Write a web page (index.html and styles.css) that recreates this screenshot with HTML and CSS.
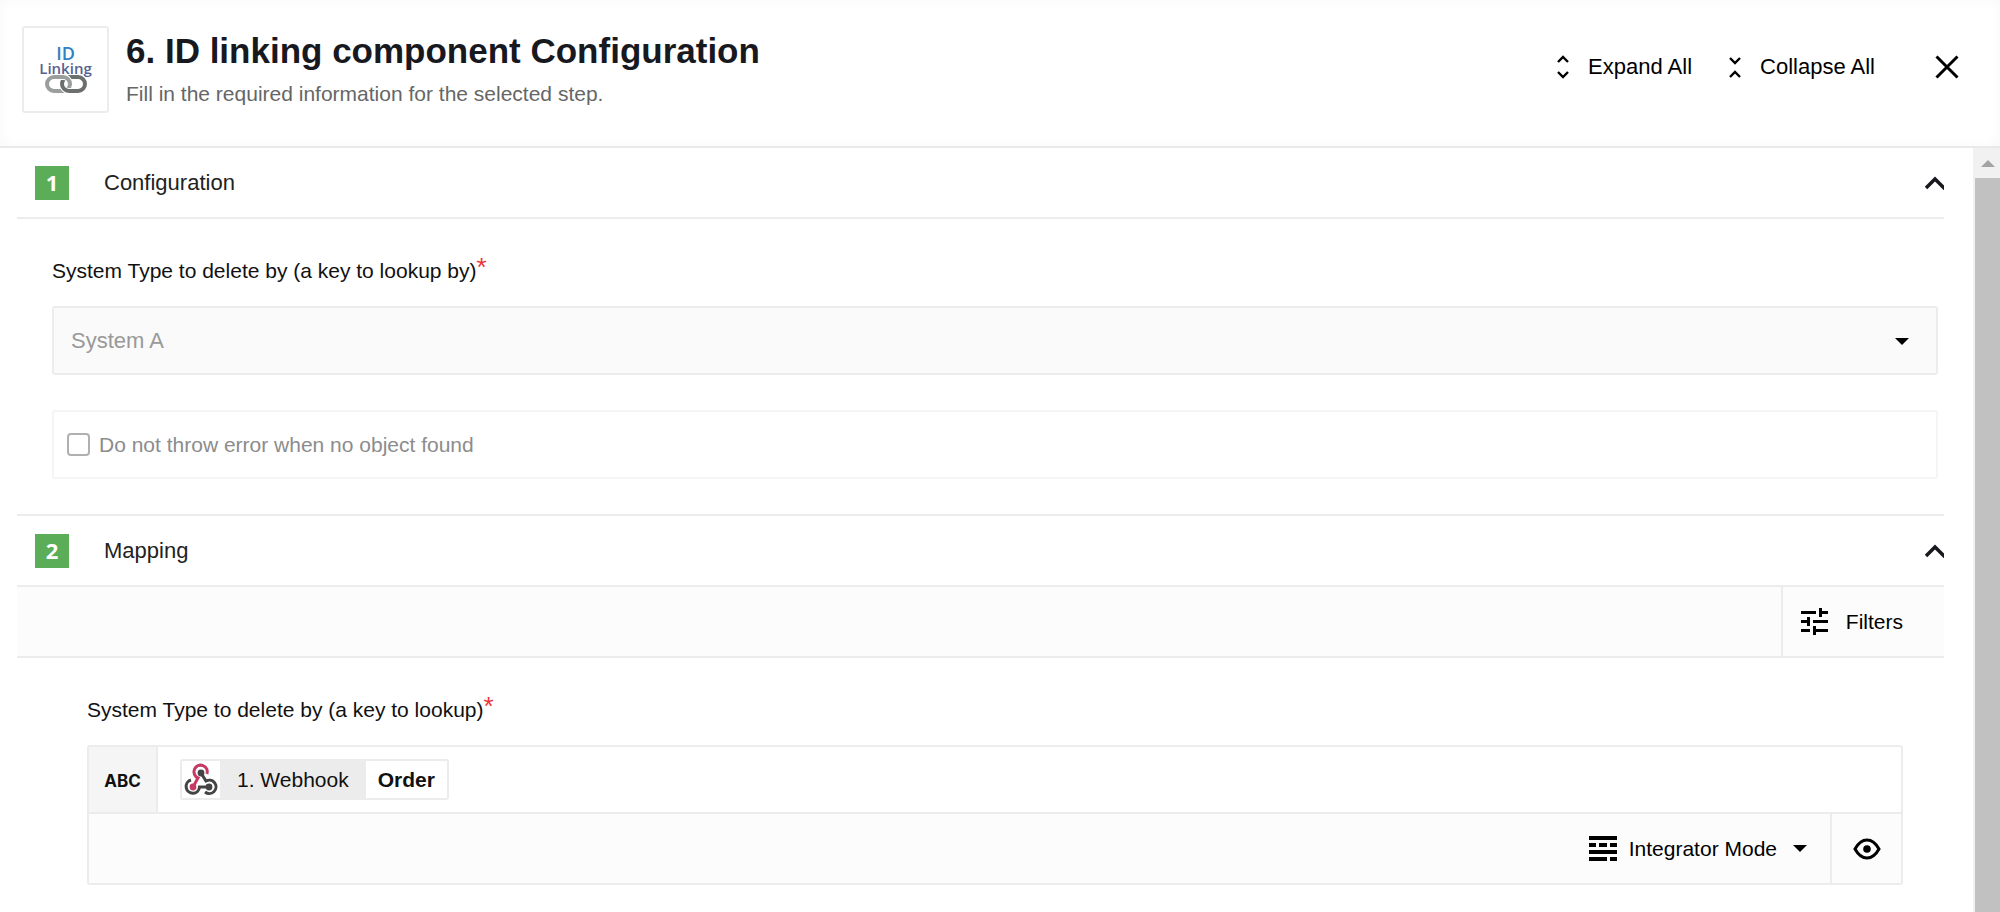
FILE: index.html
```html
<!DOCTYPE html>
<html lang="en">
  <head>
    <meta charset="UTF-8" />
    <meta name="viewport" content="width=device-width, initial-scale=1.0" />
    <title>ID linking component Configuration</title>
    <link rel="stylesheet" href="styles.css">
  </head>
  <body>
    <header class="header">
      <div class="logo">
        <div class="logo-text"><span class="logo-id">ID</span><br>Linking</div>
        <svg class="logo-chain" width="42" height="20" viewBox="0 0 42 20" fill="none" stroke-width="4">
          <rect x="2" y="2" width="23" height="14" rx="7" stroke="#9a9e9d" />
          <rect x="17" y="2" width="23" height="14" rx="7" stroke="#fff" stroke-width="6" />
          <rect x="17" y="2" width="23" height="14" rx="7" stroke="#6b6f6e" />
          <path d="M15 2h3a7 7 0 0 1 7 7" stroke="#fff" stroke-width="6" />
          <path d="M13 2h5a7 7 0 0 1 7 7v1" stroke="#9a9e9d" />
        </svg>
      </div>
      <div class="header-text">
        <h1>6. ID linking component Configuration</h1>
        <p>Fill in the required information for the selected step.</p>
      </div>
      <div class="actions">
        <button class="action" type="button">
          <svg width="12" height="24" viewBox="0 0 12 24" fill="none" stroke="currentColor" stroke-width="2.4">
            <path d="M1 7l5-5 5 5M1 17l5 5 5-5" />
          </svg>
          Expand All
        </button>
        <button class="action" type="button">
          <svg width="12" height="24" viewBox="0 0 12 24" fill="none" stroke="currentColor" stroke-width="2.4">
            <path d="M1 3l5 5 5-5M1 22l5-5 5 5" />
          </svg>
          Collapse All
        </button>
        <button class="close" type="button" aria-label="Close">
          <svg width="24" height="24" viewBox="0 0 24 24" fill="none" stroke="currentColor" stroke-width="3">
            <path d="M1.5 1.5l21 21M22.5 1.5l-21 21" />
          </svg>
        </button>
      </div>
    </header>

    <div class="main">
      <main class="content">
        <section class="section">
          <div class="section-header">
            <span class="step">1</span>
            <h2>Configuration</h2>
            <button class="toggle" type="button" aria-label="Collapse Configuration">
              <svg width="19" height="14" viewBox="0 0 19 14" fill="none" stroke="currentColor" stroke-width="3.5">
                <path d="M1 12l9-9 10 10" />
              </svg>
            </button>
          </div>
          <div class="fields">
            <label class="label" for="system-type">System Type to delete by (a key to lookup by)<span class="required">*</span></label>
            <div class="select-box">
              <select id="system-type" disabled>
                <option>System A</option>
              </select>
              <svg class="select-caret" width="14" height="7" viewBox="0 0 14 7"><path d="M0 0h14L7 7z" /></svg>
            </div>
            <div class="check-box">
              <input id="no-error" type="checkbox" disabled>
              <label for="no-error">Do not throw error when no object found</label>
            </div>
          </div>
        </section>

        <section class="section">
          <div class="section-header">
            <span class="step">2</span>
            <h2>Mapping</h2>
            <button class="toggle" type="button" aria-label="Collapse Mapping">
              <svg width="19" height="14" viewBox="0 0 19 14" fill="none" stroke="currentColor" stroke-width="3.5">
                <path d="M1 12l9-9 10 10" />
              </svg>
            </button>
          </div>
          <div class="toolbar">
            <button class="filters" type="button">
              <svg width="27" height="27" viewBox="3 3 18 18">
                <path d="M3 17v2h6v-2H3zM3 5v2h10V5H3zm10 16v-2h8v-2h-8v-2h-2v6h2zM7 9v2H3v2h4v2h2V9H7zm14 4v-2H11v2h10zm-6-4h2V7h4V5h-4V3h-2v6z" />
              </svg>
              Filters
            </button>
          </div>
          <div class="mapping">
            <div class="label" id="mapping-label">System Type to delete by (a key to lookup)<span class="required">*</span></div>
            <div class="editor" role="group" aria-labelledby="mapping-label">
              <div class="editor-value">
                <span class="type">ABC</span>
                <div class="chip">
                  <svg class="chip-icon" width="38" height="36" viewBox="0 0 38 36" fill="none" stroke-width="3">
                    <path d="M9 18a6.700 6.700 0 1 0 8.500 7H27" stroke="#444" />
                    <path d="M19 11l5 8a6.700 6.700 0 1 1-1 11" stroke="#444" />
                    <path d="M11 25l5-9a6.700 6.700 0 1 1 9-4" stroke="#c73a63" />
                    <circle cx="11" cy="25" r="3.400" fill="#c73a63" />
                    <circle cx="19" cy="11" r="3.400" fill="#444" />
                    <circle cx="27" cy="25" r="3.400" fill="#444" />
                  </svg>
                  <span class="chip-step">1. Webhook</span>
                  <strong class="chip-field">Order</strong>
                </div>
              </div>
              <div class="editor-footer">
                <button class="mode" type="button">
                  <svg width="28" height="25" viewBox="0 0 28 25">
                    <path d="M0 0h28v4H0zM0 7h7v4H0zM10 7h8v4h-8zM21 7h7v4h-7zM0 14h28v4H0zM0 21h18v4H0zM21 21h7v4h-7z" />
                  </svg>
                  Integrator Mode
                  <svg class="mode-caret" width="14" height="7" viewBox="0 0 14 7"><path d="M0 0h14L7 7z" /></svg>
                </button>
                <button class="preview" type="button" aria-label="Preview">
                  <svg width="28" height="22" viewBox="0 0 28 22">
                    <path d="M2 11Q7 2 14 2t12 9q-5 9-12 9T2 11z" fill="none" stroke="currentColor" stroke-width="3" />
                    <circle cx="14" cy="11" r="3.8" />
                  </svg>
                </button>
              </div>
            </div>
          </div>
        </section>
      </main>
      <div class="scrollbar" aria-hidden="true">
        <div class="scroll-up">
          <svg width="14" height="7" viewBox="0 0 14 7"><path d="M0 7h14L7 0z" /></svg>
        </div>
        <div class="scroll-thumb"></div>
      </div>
    </div>
  </body>
</html>
```
FILE: styles.css
```css
* {
  box-sizing: border-box;
}
body {
  display: flex;
  flex-direction: column;
  margin: 0;
  min-height: 100vh;
  background: #fff;
  color: #111;
  font-family: 'Liberation Sans', Arial, sans-serif;
  font-size: 21px;
  line-height: 24px;
}
h1,
h2,
p {
  margin: 0;
}
button {
  display: flex;
  align-items: center;
  padding: 0;
  border: 0;
  background: none;
  color: #000;
  font: inherit;
  cursor: pointer;
}
svg {
  display: block;
  flex: none;
}

/* Header */
.header {
  display: flex;
  align-items: flex-start;
  padding: 26px 41px 33px 22px;
  border-bottom: 2px solid #e9e9e9;
  box-shadow: inset 0 0 14px rgba(0, 0, 0, 0.03);
}
.logo {
  display: flex;
  flex-direction: column;
  align-items: center;
  width: 87px;
  height: 87px;
  padding-top: 18px;
  border: 2px solid #ececec;
  border-radius: 3px;
  background: #fff;
}
.logo-text {
  color: #56628f;
  font-family: 'Open Sans', 'Noto Sans', sans-serif;
  font-size: 15px;
  font-weight: 600;
  line-height: 14px;
  text-align: center;
}
.logo-id {
  color: #2f81c3;
  font-size: 18px;
}
.header-text {
  flex: 1;
  padding-left: 17px;
}
h1 {
  color: #18191f;
  font-size: 35px;
  line-height: 50px;
}
.header-text p {
  color: #666;
  line-height: 36px;
}
.actions {
  display: flex;
  align-items: center;
  padding-top: 29px;
}
.action {
  gap: 19px;
  margin-right: 37px;
  font-size: 22px;
}
.close {
  margin-left: 23px;
}

/* Scrolling area */
.main {
  display: flex;
  flex: 1;
}
.content {
  flex: 1;
  padding: 0 29px 0 17px;
}
.scrollbar {
  display: flex;
  flex-direction: column;
  width: 27px;
  padding-left: 2px;
  background: #f1f1f1;
}
.scroll-up {
  display: flex;
  align-items: center;
  justify-content: center;
  height: 30px;
  fill: #a3a3a3;
}
.scroll-thumb {
  flex: 1;
  background: #c1c1c1;
}

/* Sections */
.section + .section {
  border-top: 2px solid #ececec;
}
.section-header {
  display: flex;
  align-items: center;
  height: 71px;
  padding-left: 18px;
  border-bottom: 2px solid #ececec;
}
.step {
  width: 34px;
  margin-right: 35px;
  padding-bottom: 2px;
  background: #5bad57;
  color: #fff;
  font-family: 'Open Sans', 'Noto Sans', sans-serif;
  font-size: 22px;
  font-weight: 700;
  line-height: 32px;
  text-align: center;
}
h2 {
  flex: 1;
  color: #222;
  font-size: 22px;
  font-weight: 400;
}
.toggle {
  color: #18191f;
}
.label {
  display: block;
  margin-bottom: 23px;
}
.required {
  color: #f0323c;
  font-size: 26px;
  line-height: 20px;
  vertical-align: 2px;
}
.fields {
  padding: 38px 6px 35px 35px;
}
.select-box {
  position: relative;
  margin-bottom: 35px;
}
.select-box select {
  display: block;
  width: 100%;
  height: 69px;
  padding: 0 17px;
  border: 2px solid #ececec;
  border-radius: 3px;
  appearance: none;
  background: #fafafa;
  color: #999;
  font: inherit;
  font-size: 22px;
  opacity: 1;
}
.select-caret {
  position: absolute;
  top: 32px;
  right: 29px;
  pointer-events: none;
}
.check-box {
  display: flex;
  align-items: center;
  gap: 9px;
  height: 69px;
  padding-left: 13px;
  border: 2px solid #f5f5f5;
  border-radius: 3px;
  color: #8c8c8c;
}
.check-box input {
  width: 23px;
  height: 23px;
  margin: 0;
  border: 2px solid #b0b0b0;
  border-radius: 4px;
  appearance: none;
  background: #fff;
}

/* Mapping */
.toolbar {
  display: flex;
  justify-content: flex-end;
  height: 71px;
  border-bottom: 2px solid #ececec;
  background: #fcfcfc;
}
.filters {
  gap: 18px;
  padding: 0 41px 0 18px;
  border-left: 2px solid #ececec;
}
.mapping {
  padding: 38px 41px 29px 70px;
}
.editor {
  border: 2px solid #ececec;
  border-radius: 3px;
}
.editor-value {
  display: flex;
  align-items: center;
  height: 65px;
}
.type {
  align-self: stretch;
  width: 69px;
  border-right: 2px solid #ececec;
  background: #f5f5f5;
  font-family: Inter, sans-serif;
  font-size: 17px;
  font-weight: 700;
  line-height: 69px;
  text-align: center;
}
.chip {
  display: flex;
  align-items: center;
  margin-left: 22px;
  border: 2px solid #ececec;
  border-radius: 3px;
  line-height: 37px;
}
.chip-step {
  padding: 0 17px;
  background: #ececec;
}
.chip-field {
  padding: 0 12px;
}
.editor-footer {
  display: flex;
  justify-content: flex-end;
  height: 71px;
  border-top: 2px solid #ececec;
  background: #fcfcfc;
}
.mode {
  gap: 12px;
  padding-right: 23px;
}
.mode-caret {
  margin-left: 4px;
}
.preview {
  justify-content: center;
  width: 71px;
  border-left: 2px solid #ececec;
}
```
